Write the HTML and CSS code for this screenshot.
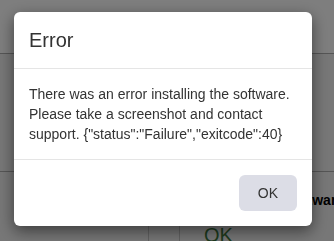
FILE: index.html
```html
<!DOCTYPE html>
<html>
<head>
<meta charset="utf-8">
<link rel="stylesheet" href="styles.css">
</head>
<body>
<div class="page">
  <header class="topbar"></header>
  <main class="content">
    <div class="spacer"></div>
    <div class="table">
      <div class="col c1"></div>
      <div class="col c2"></div>
      <div class="col c3">
        <div class="th">Software</div>
        <div class="status">OK</div>
      </div>
    </div>
  </main>
</div>
<div class="overlay">
  <div class="modal">
    <div class="modal-header"><h4 class="modal-title">Error</h4></div>
    <div class="modal-body">There was an error installing the software. Please take a screenshot and contact support. {"status":"Failure","exitcode":40}</div>
    <div class="modal-footer"><button class="btn">OK</button></div>
  </div>
</div>
</body>
</html>
```
FILE: styles.css
```css
html, body {
  margin: 0;
  padding: 0;
}
body {
  width: 334px;
  height: 241px;
  overflow: hidden;
  font-family: "Liberation Sans", Arial, sans-serif;
  background: #eeeeee;
}
.topbar {
  height: 53px;
  background: #fcfcfc;
  border-bottom: 1px solid #ababab;
}
.content {
  background: #eeeeee;
}
.spacer {
  height: 117px;
}
.table {
  border-top: 1px solid #ababab;
  display: grid;
  grid-template-columns: 148px 31px 1fr;
  height: 80px;
}
.col + .col {
  border-left: 1px solid #c4c4c4;
}
.c3 {
  padding-left: 24px;
}
.th {
  margin-top: 18px;
  margin-left: 81px;
  font-weight: bold;
  font-size: 14px;
  line-height: 20px;
  color: #000;
  white-space: nowrap;
}
.status {
  margin-top: 13px;
  font-size: 20px;
  line-height: 24px;
  color: #3c763d;
}
.overlay {
  position: fixed;
  inset: 0;
  background: rgba(0, 0, 0, 0.5);
  padding: 12px 0 0 14px;
}
.modal {
  width: 298px;
  background: #fff;
  border-radius: 6px;
  box-shadow: 0 5px 15px rgba(0, 0, 0, 0.5);
  color: #333;
}
.modal-header {
  padding: 15px;
  border-bottom: 1px solid #e5e5e5;
}
.modal-title {
  margin: 0;
  font-size: 20px;
  line-height: 26px;
  font-weight: normal;
}
.modal-body {
  padding: 15px;
  font-size: 14px;
  line-height: 20px;
}
.modal-footer {
  padding: 15px;
  border-top: 1px solid #e5e5e5;
  display: flex;
  justify-content: flex-end;
}
.btn {
  height: 36px;
  padding: 0 19px;
  border: none;
  border-radius: 6px;
  background: #dcdde6;
  color: #333;
  font-family: inherit;
  font-size: 14px;
}
```
